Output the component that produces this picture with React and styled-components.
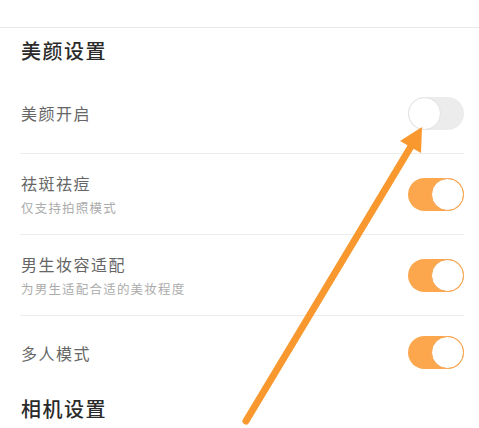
import styled, { createGlobalStyle } from "styled-components";

const GlobalStyle = createGlobalStyle`
  html, body {
    margin: 0;
    padding: 0;
    background: #ffffff;
  }
  body {
    font-family: "Noto Sans CJK SC", "Noto Sans", sans-serif;
  }
`;

const Page = styled.div`
  position: relative;
  width: 479px;
  height: 428px;
  overflow: hidden;
  background: #ffffff;
`;

const TopBar = styled.div`
  height: 27px;
  border-bottom: 1px solid #e8e8e8;
`;

const SectionTitle = styled.h2`
  margin: 0;
  height: ${(p) => p.$height}px;
  padding-left: 21px;
  display: flex;
  align-items: center;
  font-size: 20px;
  font-weight: 500;
  color: #2a2a2a;
  letter-spacing: 1.5px;
`;

const Row = styled.div`
  margin: 0 15px 0 20px;
  height: ${(p) => p.$height || 81}px;
  box-sizing: border-box;
  display: flex;
  align-items: center;
  justify-content: space-between;
  border-bottom: ${(p) => (p.$last ? "none" : "1px solid #ececec")};
`;

const Texts = styled.div`
  display: flex;
  flex-direction: column;
  gap: 7px;
  padding-left: 1px;
`;

const Label = styled.span`
  font-size: 16px;
  line-height: 20px;
  color: #666666;
  letter-spacing: 1.5px;
`;

const Hint = styled.span`
  font-size: 12.5px;
  line-height: 16px;
  color: #ababab;
  letter-spacing: 1.2px;
`;

const Switch = styled.div`
  position: relative;
  width: 56px;
  height: 33px;
  border-radius: 17px;
  background: ${(p) => (p.$on ? "#fca74d" : "#ececec")};
  flex-shrink: 0;

  &::after {
    content: "";
    position: absolute;
    top: 0;
    ${(p) => (p.$on ? "right: 0;" : "left: 0;")}
    width: 33px;
    height: 33px;
    box-sizing: border-box;
    border-radius: 50%;
    background: #ffffff;
    border: 1px solid ${(p) => (p.$on ? "#f7a048" : "#e2e2e2")};
  }
`;

const Arrow = styled.svg`
  position: absolute;
  left: 0;
  top: 0;
  pointer-events: none;
`;

const rows = [
  { label: "美颜开启", on: false },
  { label: "祛斑祛痘", hint: "仅支持拍照模式", on: true },
  { label: "男生妆容适配", hint: "为男生适配合适的美妆程度", on: true },
  { label: "多人模式", on: true, last: true, height: 73 },
];

export default function App() {
  return (
    <>
      <GlobalStyle />
      <Page>
        <TopBar />
        <SectionTitle $height={45}>美颜设置</SectionTitle>
        {rows.map((r) => (
          <Row key={r.label} $last={r.last} $height={r.height}>
            <Texts>
              <Label>{r.label}</Label>
              {r.hint && <Hint>{r.hint}</Hint>}
            </Texts>
            <Switch $on={r.on} />
          </Row>
        ))}
        <SectionTitle $height={38}>相机设置</SectionTitle>
        <Arrow width="479" height="428" viewBox="0 0 479 428">
          <line
            x1="246"
            y1="421"
            x2="413"
            y2="143"
            stroke="#f8982e"
            strokeWidth="7"
            strokeLinecap="round"
          />
          <polygon points="422,127 400,141 421,153" fill="#f8982e" />
        </Arrow>
      </Page>
    </>
  );
}
